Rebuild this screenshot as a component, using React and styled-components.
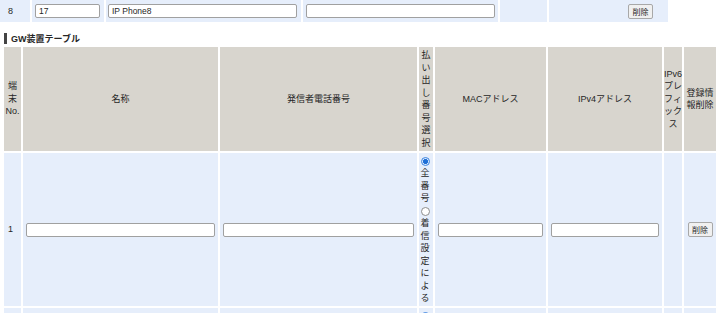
import React from "react";
import styled, { createGlobalStyle } from "styled-components";

const GlobalStyle = createGlobalStyle`
  html, body {
    margin: 0;
    padding: 0;
    overflow: hidden;
    background: #ffffff;
  }
  body {
    font-family: "Liberation Sans", "Noto Sans CJK JP", sans-serif;
    font-size: 9px;
    color: #262626;
  }
`;

const Page = styled.div`
  display: flex;
  flex-direction: column;
  align-items: flex-start;
`;

const TopRow = styled.div`
  display: grid;
  grid-template-columns: 30px 72px 195px 195px 47px 119px;
  column-gap: 2px;
`;

const TopCell = styled.div`
  box-sizing: border-box;
  height: 22px;
  background: #e6eefb;
  display: flex;
  align-items: center;
  justify-content: ${(p) => p.$justify || "flex-start"};
  padding: 0 ${(p) => p.$pr || 0}px 0 ${(p) => p.$pl || 0}px;
`;

const TextInput = styled.input`
  box-sizing: border-box;
  width: 100%;
  height: 14px;
  margin: 0;
  padding: 0 3px;
  border: 1px solid #a0a0a0;
  border-radius: 2px;
  background: #ffffff;
  font: 8.5px "Liberation Sans", "Noto Sans CJK JP", sans-serif;
  color: #262626;
  outline: none;
`;

const SmallButton = styled.button`
  box-sizing: border-box;
  width: 25px;
  height: 15px;
  margin: 0;
  padding: 0;
  border: 1px solid #a8a8a8;
  border-radius: 2px;
  background: #f0f0f0;
  font: 8px "Liberation Sans", "Noto Sans CJK JP", sans-serif;
  color: #262626;
`;

const Title = styled.h2`
  box-sizing: border-box;
  margin: 9px 0 0 4px;
  height: 14px;
  display: flex;
  align-items: center;
  gap: 4px;
  font-size: 9px;
  font-weight: bold;
  color: #262626;
  &::before {
    content: "";
    display: block;
    width: 3px;
    height: 11px;
    background: #444444;
  }
`;

const Table = styled.table`
  margin-left: 2px;
  width: 716px;
  table-layout: fixed;
  border-collapse: separate;
  border-spacing: 2px;
`;

const Th = styled.th`
  box-sizing: border-box;
  background: #d8d5ce;
  font-weight: normal;
  font-size: 9px;
  line-height: 12.5px;
  padding: 2px 0;
  text-align: center;
  vertical-align: middle;
  color: #262626;
  white-space: nowrap;
`;

const Td = styled.td`
  box-sizing: border-box;
  background: #e6eefb;
  font-size: 9px;
  line-height: 12.5px;
  padding: 1.5px ${(p) => (p.$tight ? 0 : 3)}px;
  text-align: ${(p) => p.$align || "left"};
  vertical-align: middle;
  color: #262626;
`;

const NumText = styled.span`
  padding-left: 1px;
`;

const StackCell = styled.div`
  display: flex;
  flex-direction: column;
  align-items: center;
  margin-left: -2px;
`;

const Radio = styled.span`
  display: block;
  box-sizing: border-box;
  width: 9px;
  height: 9px;
  margin: 2px 0 1.5px;
  border-radius: 50%;
  border: 1px solid ${(p) => (p.$checked ? "#3f86e0" : "#8d8d8d")};
  background: ${(p) =>
    p.$checked
      ? "radial-gradient(circle, #1f6fd6 0 2.2px, #d9e8fb 2.8px)"
      : "#ffffff"};
`;

const Chars = styled.div`
  text-align: center;
`;

const CenterCell = styled.div`
  display: flex;
  justify-content: center;
`;

const cols = [17, 195, 197, 14, 111, 114, 18, 32];

function GwRow({ n }) {
  return (
    <tr>
      <Td>
        <NumText>{n}</NumText>
      </Td>
      <Td>
        <TextInput defaultValue="" />
      </Td>
      <Td>
        <TextInput defaultValue="" />
      </Td>
      <Td $tight>
        <StackCell>
          <Radio $checked />
          <Chars>
            全<br />番<br />号
          </Chars>
          <Radio />
          <Chars>
            着<br />信<br />設<br />定<br />に<br />よ<br />る
          </Chars>
        </StackCell>
      </Td>
      <Td>
        <TextInput defaultValue="" />
      </Td>
      <Td>
        <TextInput defaultValue="" />
      </Td>
      <Td />
      <Td $tight>
        <CenterCell>
          <SmallButton>削除</SmallButton>
        </CenterCell>
      </Td>
    </tr>
  );
}

export default function App() {
  return (
    <>
      <GlobalStyle />
      <Page>
        <TopRow>
          <TopCell $pl={8}>8</TopCell>
          <TopCell $pl={3} $pr={4}>
            <TextInput defaultValue="17" />
          </TopCell>
          <TopCell $pl={2} $pr={4}>
            <TextInput defaultValue="IP Phone8" />
          </TopCell>
          <TopCell $pl={3} $pr={3}>
            <TextInput defaultValue="" />
          </TopCell>
          <TopCell />
          <TopCell $justify="flex-end" $pr={15}>
            <SmallButton>削除</SmallButton>
          </TopCell>
        </TopRow>

        <Title>GW装置テーブル</Title>

        <Table>
          <colgroup>
            {cols.map((w, i) => (
              <col key={i} style={{ width: w }} />
            ))}
          </colgroup>
          <thead>
            <tr>
              <Th>
                端<br />末<br />No.
              </Th>
              <Th>名称</Th>
              <Th>発信者電話番号</Th>
              <Th>
                払<br />い<br />出<br />し<br />番<br />号<br />選<br />択
              </Th>
              <Th>MACアドレス</Th>
              <Th>IPv4アドレス</Th>
              <Th>
                IPv6<br />プレ<br />フィ<br />ック<br />ス
              </Th>
              <Th>
                登録情<br />報削除
              </Th>
            </tr>
          </thead>
          <tbody>
            <GwRow n={1} />
            <GwRow n={2} />
          </tbody>
        </Table>
      </Page>
    </>
  );
}
